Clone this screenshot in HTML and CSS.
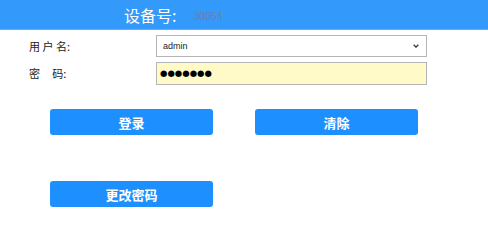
FILE: index.html
```html
<!DOCTYPE html>
<html>
<head>
<meta charset="utf-8">
<link rel="stylesheet" href="styles.css">
</head>
<body>
<div class="header">
  <span class="dev-label">设备号:</span>
  <span class="dev-no">30054</span>
</div>
<div class="form">
  <div class="row">
    <label class="label">用 户 名:</label>
    <div class="select">
      <span class="sel-text">admin</span>
      <svg class="chev" width="6" height="4" viewBox="0 0 6 4"><path d="M0.7 0.7 L3 3.1 L5.3 0.7" fill="none" stroke="#333" stroke-width="1.3"/></svg>
    </div>
  </div>
  <div class="row row2">
    <label class="label">密&nbsp;&nbsp;&nbsp;&nbsp;&nbsp;码:</label>
    <div class="pwd">●●●●●●●</div>
  </div>
</div>
<div class="btns">
  <button class="btn">登录</button>
  <button class="btn">清除</button>
</div>
<div class="btns btns2">
  <button class="btn">更改密码</button>
</div>
</body>
</html>
```
FILE: styles.css
```css
html, body {
  margin: 0;
  padding: 0;
  background: #fff;
  font-family: "Noto Sans CJK SC", "Noto Sans", sans-serif;
}
.header {
  height: 30px;
  background: #3399fb;
  border-bottom: 1px solid #5fb0fb;
  box-sizing: border-box;
  display: flex;
  align-items: center;
  padding-left: 124px;
}
.dev-label {
  color: #fff;
  font-size: 16px;
  line-height: 30px;
}
.dev-no {
  margin-left: 17px;
  color: #6f829c;
  font-family: "Liberation Sans", sans-serif;
  font-size: 10.5px;
  margin-top: 2px;
}
.form {
  padding-top: 5px;
}
.row {
  display: flex;
  align-items: center;
  height: 22px;
}
.row2 {
  margin-top: 5px;
}
.label {
  width: 156px;
  flex-shrink: 0;
  padding-left: 29px;
  box-sizing: border-box;
  font-size: 11px;
  color: #222;
}
.select {
  width: 271px;
  height: 22px;
  box-sizing: border-box;
  border: 1px solid #b5b5b5;
  background: #fff;
  display: flex;
  align-items: center;
  padding: 0 7px 0 6px;
}
.sel-text {
  flex: 1;
  font-family: "Liberation Sans", sans-serif;
  font-size: 9px;
  color: #222;
}
.chev {
  display: block;
}
.pwd {
  width: 271px;
  height: 23px;
  box-sizing: border-box;
  border: 1px solid #b5b5b5;
  background: #fffac8;
  display: flex;
  align-items: center;
  padding-left: 3px;
  font-family: "DejaVu Sans", sans-serif;
  font-size: 8.5px;
  color: #000;
}
.btns {
  display: flex;
  gap: 42px;
  padding-left: 50px;
  margin-top: 25px;
}
.btns2 {
  margin-top: 46px;
}
.btn {
  width: 163px;
  height: 26px;
  border: none;
  border-radius: 3px;
  background: #1e8fff;
  color: #fff;
  font-family: "Noto Sans CJK SC", sans-serif;
  font-size: 13px;
  font-weight: bold;
  padding: 0;
}
```
